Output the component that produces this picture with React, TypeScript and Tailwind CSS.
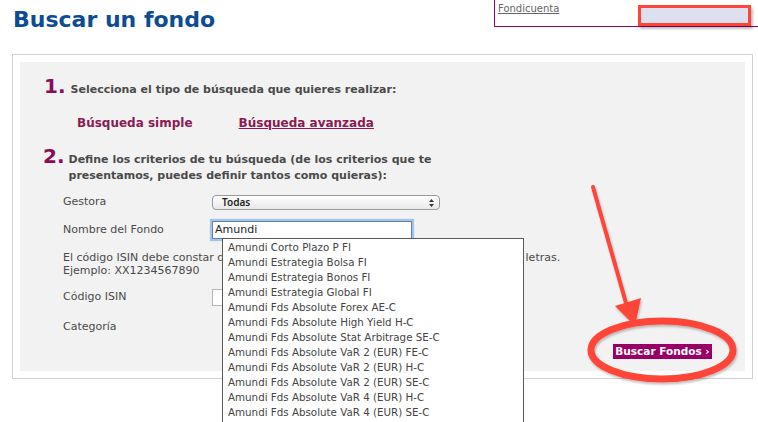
import React from "react";

const items = [
  "Amundi Corto Plazo P FI",
  "Amundi Estrategia Bolsa FI",
  "Amundi Estrategia Bonos FI",
  "Amundi Estrategia Global FI",
  "Amundi Fds Absolute Forex AE-C",
  "Amundi Fds Absolute High Yield H-C",
  "Amundi Fds Absolute Stat Arbitrage SE-C",
  "Amundi Fds Absolute VaR 2 (EUR) FE-C",
  "Amundi Fds Absolute VaR 2 (EUR) H-C",
  "Amundi Fds Absolute VaR 2 (EUR) SE-C",
  "Amundi Fds Absolute VaR 4 (EUR) H-C",
  "Amundi Fds Absolute VaR 4 (EUR) SE-C",
  "Amundi Fds Absolute VaR 4 (EUR) FE-C",
];

export default function App() {
  return (
    <div className="relative w-[758px] h-[422px] overflow-hidden bg-white font-['DejaVu_Sans',Verdana,sans-serif] text-[#444]">
      {/* header */}
      <div className="flex h-[54px] items-start">
        <div className="pl-[13px] pt-[7px] text-[22px] leading-[26px] font-bold text-[#0b4c94]">
          Buscar un fondo
        </div>
        <div className="relative ml-auto w-[264px] h-[27px] border-l border-b border-[#990066] pl-[3px] pt-[3px] text-[10px] leading-[12px]">
          <a className="block text-[10px] leading-[12px] text-[#666] underline">Fondicuenta</a>
          <div className="absolute left-[143px] top-[5px] w-[113px] h-[21px] border-[3px] border-[#ff4538] bg-[#dfe0ef] shadow-[2px_3px_2px_rgba(0,0,0,0.25)]" />
        </div>
      </div>

      {/* outer box */}
      <div className="ml-[12px] w-[741px] h-[325px] border border-[#d0d0d0] p-[7px]">
        <div className="h-full bg-[#f2f2f2] pt-[14px]">
          {/* step 1 */}
          <div className="flex items-baseline pl-[24px]">
            <span className="text-[20px] leading-[20px] font-bold text-[#8a0d57]">1.</span>
            <span className="ml-[5px] text-[11px] leading-[16px] font-bold text-[#4a4a4a]">
              Selecciona el tipo de búsqueda que quieres realizar:
            </span>
          </div>
          <div className="mt-[17px] flex pl-[57px] text-[12px] leading-[16px] font-bold text-[#8b1a52]">
            <span>Búsqueda simple</span>
            <a className="ml-[46px] underline">Búsqueda avanzada</a>
          </div>
          {/* step 2 */}
          <div className="mt-[15px] flex items-baseline pl-[23px] h-[38px]">
            <span className="text-[20px] leading-[20px] font-bold text-[#8a0d57]">2.</span>
            <span className="ml-[4px] text-[11px] leading-[16px] font-bold text-[#4a4a4a]">
              Define los criterios de tu búsqueda (de los criterios que te
              <br />
              presentamos, puedes definir tantos como quieras):
            </span>
          </div>

          {/* form */}
          <div className="mt-[11px] pl-[43px] text-[11px] text-[#4a4a4a]">
            <div className="flex items-center h-[15px]">
              <span className="w-[149px]">Gestora</span>
              <div className="relative flex items-center w-[228px] h-[15px] rounded-[4px] border border-[#9a9a9a] bg-linear-to-b from-white to-[#e8e8e8] pl-[9px] font-['Noto_Sans',sans-serif] text-[10px] font-semibold text-[#222]">
                Todas
                <svg className="absolute right-[5px] top-[3px]" width="5" height="8" viewBox="0 0 5 8">
                  <path d="M2.5 0L5 3H0z M2.5 8L0 5h5z" fill="#333" />
                </svg>
              </div>
            </div>
            <div className="mt-[11px] flex items-center h-[18px]">
              <span className="w-[149px]">Nombre del Fondo</span>
              <div className="w-[200px] h-[18px] border border-[#5f83b0] bg-white shadow-[0_0_1px_2px_#a3c5ec] pl-[2px] text-[11px] leading-[16px] text-[#222]">
                Amundi
              </div>
            </div>
            <div className="mt-[12px] leading-[13px] whitespace-nowrap">
              El código ISIN debe constar de 12 caracteres alfanuméricos, y los dos primeros son letras.
              <br />
              Ejemplo: XX1234567890
            </div>
            <div className="mt-[12px] flex items-center h-[17px]">
              <span className="w-[149px]">Código ISIN</span>
              <div className="w-[120px] h-[17px] border border-[#b5b5b5] bg-white" />
            </div>
            <div className="mt-[13px] flex items-center h-[16px]">
              <span className="w-[149px]">Categoría</span>
            </div>
            <div className="mt-[9px] flex justify-end pr-[33px]">
              <button className="h-[15px] w-[99px] bg-[#990066] text-[10.5px] leading-[15px] font-bold text-white">
                Buscar Fondos ›
              </button>
            </div>
          </div>
        </div>
      </div>

      {/* autocomplete dropdown */}
      <div className="absolute left-[222px] top-[238px] w-[302px] h-[200px] border border-[#5a5a5a] bg-white pt-[1px] pl-[5px] text-[10.3px] leading-[15px] text-[#444]">
        {items.map((t) => (
          <div key={t} className="whitespace-nowrap">{t}</div>
        ))}
      </div>

      {/* annotations */}
      <svg className="absolute left-0 top-0 pointer-events-none" width="758" height="422" viewBox="0 0 758 422">
        <defs>
          <filter id="sh" x="-20%" y="-20%" width="140%" height="140%">
            <feDropShadow dx="1" dy="2" stdDeviation="1.2" floodColor="#000" floodOpacity="0.25" />
          </filter>
        </defs>
        <g filter="url(#sh)">
          <line x1="593" y1="187" x2="626" y2="303" stroke="#ff4538" strokeWidth="4" strokeLinecap="round" />
          <polygon points="635,326 615,306 641,298" fill="#ff4538" />
          <ellipse cx="662" cy="350" rx="71" ry="29" fill="none" stroke="#ff4538" strokeWidth="7" />
        </g>
      </svg>
    </div>
  );
}
